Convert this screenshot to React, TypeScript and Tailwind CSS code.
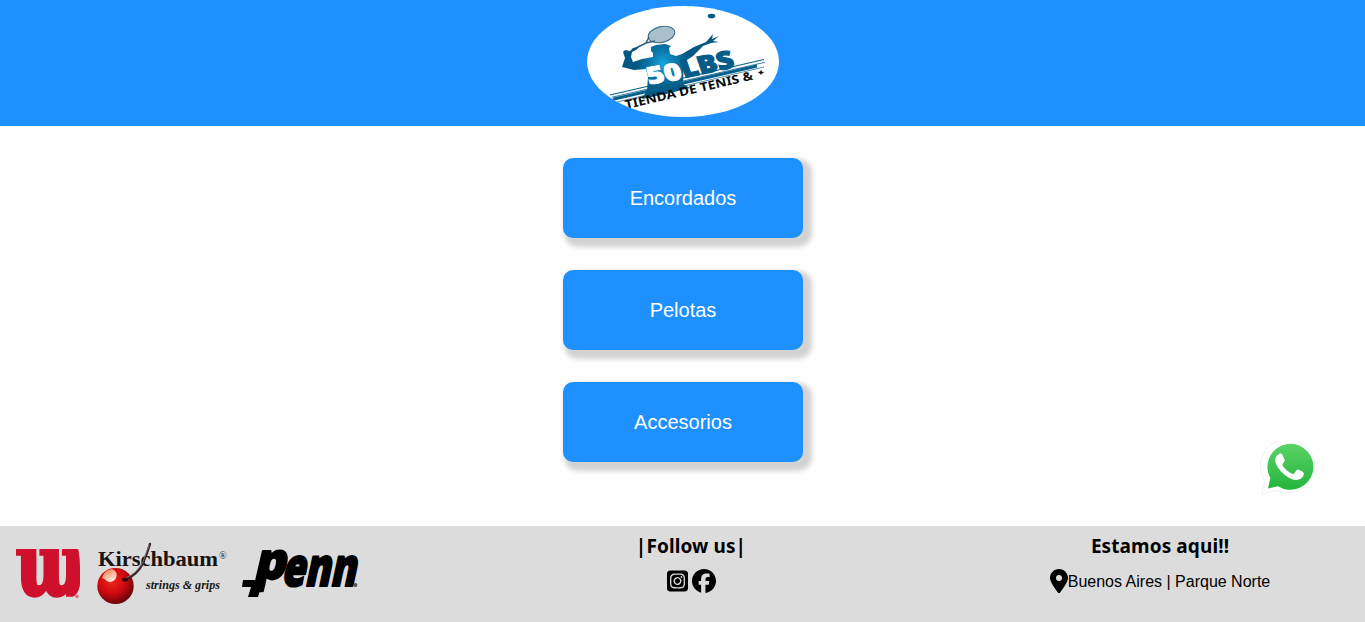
import React from "react";
import { FaFacebook, FaLocationDot, FaSquareInstagram } from "react-icons/fa6";

function StoreLogo() {
  return (
    <svg viewBox="587 6 192 111" className="h-[111px] w-[192px] rounded-[50%] bg-white" role="img" aria-label="50LBS Tienda de Tenis">
      <defs>
        <radialGradient id="body" gradientUnits="userSpaceOnUse" cx="663" cy="64" r="27">
          <stop offset="0" stopColor="#1aa3dc" />
          <stop offset="0.45" stopColor="#0b7cb0" />
          <stop offset="1" stopColor="#045882" />
        </radialGradient>
      </defs>
      <ellipse cx="711.5" cy="16" rx="3.8" ry="2.3" fill="#075d87" />
      <ellipse cx="661.5" cy="34.5" rx="13.5" ry="7.8" transform="rotate(-13 661.5 34.5)" fill="#a9c0cb" stroke="#416f88" strokeWidth="1.1" />
      <path d="M649 37 L646 43 L655 41 M646 43 L634 49" fill="none" stroke="#285f7b" strokeWidth="1.4" />
      <path d="M623 52 L625 50 L630 51 L633 48 L639 47 L636 50 L632 52 L631 57 L633 62 L642 59 L653 57 L653 53 L651 51 L651 47 L656 45 L665 44 L671 46 L669 48 L670 54 L676 56 L682 54 L694 47 L706 42 L713 34 L712 39 L719 36 L713 41 L719 42 L711 43 L703 46 L693 56 L684 62 L683 84 L690 88 L666 94 L642 99 L647 90 L648 77 L646 69 L634 70 L622 67 L625 58 Z" fill="url(#body)" />
      <g fill="none" stroke="#075f8b">
        <path d="M610 95 L764 59.5" strokeWidth="1.2" />
        <path d="M612 97.2 L765 62.3" strokeWidth="0.8" />
        <path d="M613 99.2 L757 66" strokeWidth="3.2" />
        <path d="M617 102 L764 67" strokeWidth="0.7" />
      </g>
      <g fontFamily="Noto Sans" fontWeight="900">
        <text transform="translate(649 84.5) rotate(-9) skewX(7)" fontSize="24" textLength="35" lengthAdjust="spacingAndGlyphs" fill="white" stroke="white" strokeWidth="0.9">50</text>
        <text transform="translate(684 78) rotate(-12) skewX(7)" fontSize="25" textLength="53" lengthAdjust="spacingAndGlyphs" fill="#075b87" stroke="#075b87" strokeWidth="1.2">LBS</text>
      </g>
      <text transform="translate(626 109) rotate(-13)" fontFamily="Noto Sans" fontWeight="700" fontSize="12" textLength="131" lengthAdjust="spacingAndGlyphs" fill="#080b0d">TIENDA DE TENIS &amp;</text>
      <path d="M758.5 72.5 h5 M761 70.5 v4" stroke="#111" strokeWidth="1.5" />
    </svg>
  );
}

function WilsonLogo() {
  return (
    <svg viewBox="14 544 68 56" className="h-14 w-[68px] overflow-visible" role="img" aria-label="Wilson">
      <defs>
        <clipPath id="wilsonEdge">
          <path d="M14 547 H78 Q80 556 80 566 V582 Q78 596 66 597.5 H14 Z" />
        </clipPath>
      </defs>
      <g clipPath="url(#wilsonEdge)">
        <text transform="translate(16.5 591.5) scale(1.15 1.76)" fontFamily="DejaVu Serif" fontWeight="700" fontSize="50" textLength="61" lengthAdjust="spacingAndGlyphs" fill="#cf102d" stroke="#cf102d" strokeWidth="3">ɯ</text>
      </g>
      <circle cx="77" cy="594.3" r="1.8" fill="#d86c7b" />
    </svg>
  );
}

function KirschbaumLogo() {
  return (
    <svg viewBox="94 540 136 66" className="h-[66px] w-[136px] overflow-visible" role="img" aria-label="Kirschbaum strings and grips">
      <defs>
        <radialGradient id="cherry" cx="0.4" cy="0.35" r="0.65">
          <stop offset="0" stopColor="#f2261c" />
          <stop offset="0.55" stopColor="#cf0a10" />
          <stop offset="1" stopColor="#6b0508" />
        </radialGradient>
        <linearGradient id="shine" x1="0" y1="0" x2="0.6" y2="1">
          <stop offset="0" stopColor="#f56a38" />
          <stop offset="1" stopColor="#fff1df" />
        </linearGradient>
      </defs>
      <text x="98" y="565" fontFamily="Liberation Serif" fontWeight="700" fontSize="20.5" textLength="120" lengthAdjust="spacingAndGlyphs" fill="#171313">Kirschbaum</text>
      <text x="219" y="558" fontFamily="Liberation Serif" fontSize="10" fill="#222">®</text>
      <ellipse cx="115.5" cy="585" rx="18.2" ry="18" fill="url(#cherry)" />
      <path d="M102 577 Q104 569 112 568 Q119 571 115.5 578 Q111 583 107 580 Q104 577 102 577 Z" fill="url(#shine)" />
      <path d="M125 579 Q138 573 143 562 Q147 553 150 543" fill="none" stroke="#382326" strokeWidth="2.4" strokeLinecap="round" />
      <path d="M126 577 Q138 571 143 561 Q146 553 149 544" fill="none" stroke="#a58e8f" strokeWidth="0.6" />
      <ellipse cx="125" cy="578.5" rx="3" ry="2" fill="#3b0709" />
      <text x="146" y="588" fontFamily="Liberation Serif" fontWeight="700" fontStyle="italic" fontSize="13.5" textLength="74" lengthAdjust="spacingAndGlyphs" fill="#171717">strings &amp; grips</text>
    </svg>
  );
}

function PennLogo() {
  return (
    <svg viewBox="240 546 120 54" className="h-[54px] w-[120px] overflow-visible" role="img" aria-label="Penn">
      <g fontFamily="Open Sans" fontWeight="800" fill="black" stroke="black" strokeLinejoin="round">
        <text transform="translate(253 577.5) skewX(-13)" fontSize="51" textLength="32" lengthAdjust="spacingAndGlyphs" strokeWidth="1.8">p</text>
        <text transform="translate(281 585) skewX(-12)" fontSize="53" textLength="74" lengthAdjust="spacingAndGlyphs" strokeWidth="2.2">enn</text>
      </g>
      <path d="M243 579 H265 L263 586 H261 L258 596 H248 L251 586 H242 Z" fill="black" />
      <circle cx="355.5" cy="584" r="1.9" fill="#555" />
    </svg>
  );
}

function WhatsAppLink() {
  return (
    <a href="#whatsapp" aria-label="WhatsApp" className="absolute top-[441px] right-[50px]">
      <svg viewBox="1260 440 57 57" className="size-[57px]">
        <defs>
          <linearGradient id="green" x1="0" y1="0" x2="0" y2="1">
            <stop offset="0" stopColor="#5bd366" />
            <stop offset="1" stopColor="#24b43c" />
          </linearGradient>
        </defs>
        <path d="M1263.5 493.5 L1267 480 A27 27 0 1 1 1278 489.5 Z" fill="white" stroke="#e9e9e9" strokeWidth="0.7" />
        <path d="M1270 487.5 L1272.3 477 A23 23 0 1 1 1280 485.2 Z" fill="url(#green)" />
        <path d="M1279.5 454 Q1281.5 452.8 1283 455 L1285.2 460 Q1285.7 461.5 1283 464 Q1282.5 465 1284 467 Q1288 472 1292.5 473.8 Q1294 474.3 1295 473 L1297 470.3 Q1298 469 1299.5 469.8 L1303.5 471.9 Q1305 472.8 1304 475.5 Q1302 479.5 1297 480 Q1290 480 1281.5 471.5 Q1275.5 465 1275.7 459 Q1276.2 455.8 1279.5 454 Z" fill="white" transform="translate(1.5 -1)" />
      </svg>
    </a>
  );
}

const categories = ["Encordados", "Pelotas", "Accesorios"];

export default function App() {
  return (
    <div className="relative flex h-[622px] w-full flex-col overflow-hidden bg-white font-['Liberation_Sans',sans-serif] text-black">
      <header className="flex h-[126px] shrink-0 justify-center bg-[#1e90ff] pt-1.5">
        <StoreLogo />
      </header>
      <main className="flex h-[400px] shrink-0 flex-col items-center gap-8 pt-8">
        {categories.map((name) => (
          <button key={name} className="h-20 w-60 rounded-[10px] bg-[#1e90ff] pl-px text-xl text-white shadow-[5px_5px_5px_4px_#d3d3d3]">
            {name}
          </button>
        ))}
      </main>
      <footer className="grid h-24 shrink-0 grid-cols-[456px_470px_1fr] bg-[#dcdcdc]">
        <div className="flex items-center gap-3 pl-3.5">
          <WilsonLogo />
          <KirschbaumLogo />
          <div className="-ml-0.5">
            <PennLogo />
          </div>
        </div>
        <div className="flex flex-col items-center pt-1.5">
          <h2 className="font-['Noto_Sans',sans-serif] text-[19px] leading-7 font-bold tracking-[0.1px] whitespace-nowrap">|Follow us|</h2>
          <div className="mt-[9px] flex gap-1">
            <FaSquareInstagram className="h-6 w-[21px]" />
            <FaFacebook className="size-6" />
          </div>
        </div>
        <div className="flex flex-col items-center pt-1.5 pl-[29px]">
          <h2 className="font-['Noto_Sans',sans-serif] text-[19px] leading-7 font-bold tracking-[0.1px] whitespace-nowrap">Estamos aqui!!</h2>
          <p className="mt-[9px] flex items-center text-base leading-6">
            <FaLocationDot className="h-6 w-[18px]" />
            <span className="h-6 pt-px leading-6">Buenos Aires | Parque Norte</span>
          </p>
        </div>
      </footer>
      <WhatsAppLink />
    </div>
  );
}
